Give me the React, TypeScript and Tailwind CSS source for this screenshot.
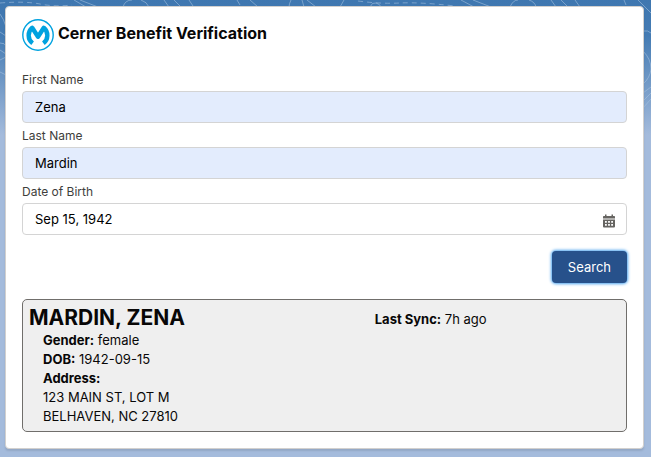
import { useState } from "react";

// Contour lines that show around the edge of the card
const Topography = () => (
  <svg
    className="absolute top-0 left-0 h-[140px] w-full"
    viewBox="0 0 651 140"
    preserveAspectRatio="none"
    fill="none"
    stroke="#a9c4e2"
    strokeOpacity="0.55"
    aria-hidden="true"
  >
    <path d="M0 3 Q25 1 40 4 T72 5" strokeDasharray="5 4" />
    <path d="M74 0 L86 7 M80 0 L98 7 M123 7 Q125 0 132 0 M141 0 Q147 2 149 7" />
    <path d="M164 0 L169 7 M174 0 L181 7 M189 0 L193 6 M237 0 L240 5 M250 0 L258 7" />
    <path d="M291 0 Q289 4 289 7 M302 0 L304 7 M307 0 L316 7 M344 0 L340 7 M370 7 Q372 2 376 3 Q380 4 381 7" />
    <path d="M358 1 Q380 4 400 3 T455 6" strokeDasharray="5 4" />
    <path d="M461 0 L474 7 M473 0 L491 7 M510 7 Q513 0 518 0 M529 0 Q535 2 536 7" />
    <path d="M551 0 L556 7 M561 0 L568 7 M575 0 L580 7 M624 0 L626 5 M638 0 L651 13" />
    <path d="M643 31 Q648 30 651 33 M643 51 Q651 59 651 69 Q650 78 643 84 M643 93 L651 87 M643 101 L651 93 M643 108 L651 99" />
    <path d="M0 14 Q4 19 6 27 M0 32 L6 36 M0 43 Q5 43 6 46 M0 50 L6 54 M0 60 L6 57 M0 72 L6 75" />
  </svg>
);

const Logo = () => (
  <svg viewBox="0 0 32 32" className="size-8 shrink-0" fill="none" stroke="#00a2df" aria-hidden="true">
    <circle cx="16" cy="16" r="15.2" fill="white" strokeWidth="1.4" />
    <path
      d="M10.6 24.2 A9.8 9.8 0 0 1 10.2 8.8 L16 17.8 L21.8 8.8 A9.8 9.8 0 0 1 21.4 24.2"
      strokeWidth="4.4"
      strokeLinejoin="round"
    />
  </svg>
);

const CalendarIcon = () => (
  <svg viewBox="0 0 14 14" className="size-[14px]" aria-hidden="true">
    <path
      fill="#666461"
      fillRule="evenodd"
      d="M3 0.5h1.5v1.5h5V0.5H11V2h1.2Q13 2 13 2.8V4.5H1V2.8Q1 2 1.8 2H3Z M1 5.5H13V12.5Q13 13.5 12 13.5H2Q1 13.5 1 12.5Z M3 7V8.7H4.8V7Z M6.1 7V8.7H7.9V7Z M9.2 7V8.7H11V7Z M3 10V11.7H4.8V10Z M6.1 10V11.7H7.9V10Z M9.2 10V11.7H11V10Z"
    />
  </svg>
);

const inputClass =
  "h-8 w-full rounded border border-[#d4d4d4] px-3 text-[13px] text-black outline-none";
const labelClass = "block pt-[2px] text-xs leading-[22px] text-[#3e3e3c]";

const App = () => {
  const [firstName, setFirstName] = useState("Zena");
  const [lastName, setLastName] = useState("Mardin");
  const [dob, setDob] = useState("Sep 15, 1942");

  return (
    <div className="relative min-h-screen bg-[#a4bbdc] bg-[linear-gradient(#3f77b0_0px,#447bb3_35px,#a4bbdc_135px)] pt-[6px] pr-[7px] pb-2 pl-[5px] font-['Inter',sans-serif] text-[13px] text-[#080707]">
      <Topography />
      <main className="relative rounded border border-[#d2d0ce] bg-white px-4 pt-3 pb-4 shadow-[0_2px_2px_rgba(0,0,0,0.1)]">
        <header className="mb-4 flex items-center gap-1">
          <Logo />
          <h1 className="pb-1 text-base leading-6 font-bold">Cerner Benefit Verification</h1>
        </header>

        <form onSubmit={(e) => e.preventDefault()}>
          <label htmlFor="firstName" className={labelClass}>First Name</label>
          <input
            id="firstName"
            type="text"
            className={`${inputClass} bg-[#e3ecfd]`}
            value={firstName}
            onChange={(e) => setFirstName(e.target.value)}
          />
          <label htmlFor="lastName" className={labelClass}>Last Name</label>
          <input
            id="lastName"
            type="text"
            className={`${inputClass} bg-[#e3ecfd]`}
            value={lastName}
            onChange={(e) => setLastName(e.target.value)}
          />
          <label htmlFor="dob" className={labelClass}>Date of Birth</label>
          <div className="relative">
            <input
              id="dob"
              type="text"
              className={`${inputClass} bg-white`}
              value={dob}
              onChange={(e) => setDob(e.target.value)}
            />
            <button type="button" aria-label="Select a date" className="absolute top-[11px] right-[11px]">
              <CalendarIcon />
            </button>
          </div>
          <div className="mt-4 flex justify-end">
            <button
              type="submit"
              className="h-8 rounded bg-[#27518b] px-4 pt-px text-[13px] text-white shadow-[0_0_3px_1px_#4ba3ee]"
            >
              Search
            </button>
          </div>
        </form>

        <section className="mt-4 grid grid-cols-12 rounded-[5px] border border-[#706e6b] bg-[#efefef] pt-1 pb-[5px] leading-[19px]">
          <div className="col-span-7 pl-[6px]">
            <h2 className="text-[21px] leading-[27px] font-bold">MARDIN, ZENA</h2>
            <div className="pl-[14px]">
              <p><b>Gender:</b> female</p>
              <p><b>DOB:</b> 1942-09-15</p>
              <p><b>Address:</b></p>
              <p>123 MAIN ST, LOT M</p>
              <p>BELHAVEN, NC 27810</p>
            </div>
          </div>
          <p className="col-span-5 pt-[6px]"><b>Last Sync:</b> 7h ago</p>
        </section>
      </main>
    </div>
  );
};

export default App;
